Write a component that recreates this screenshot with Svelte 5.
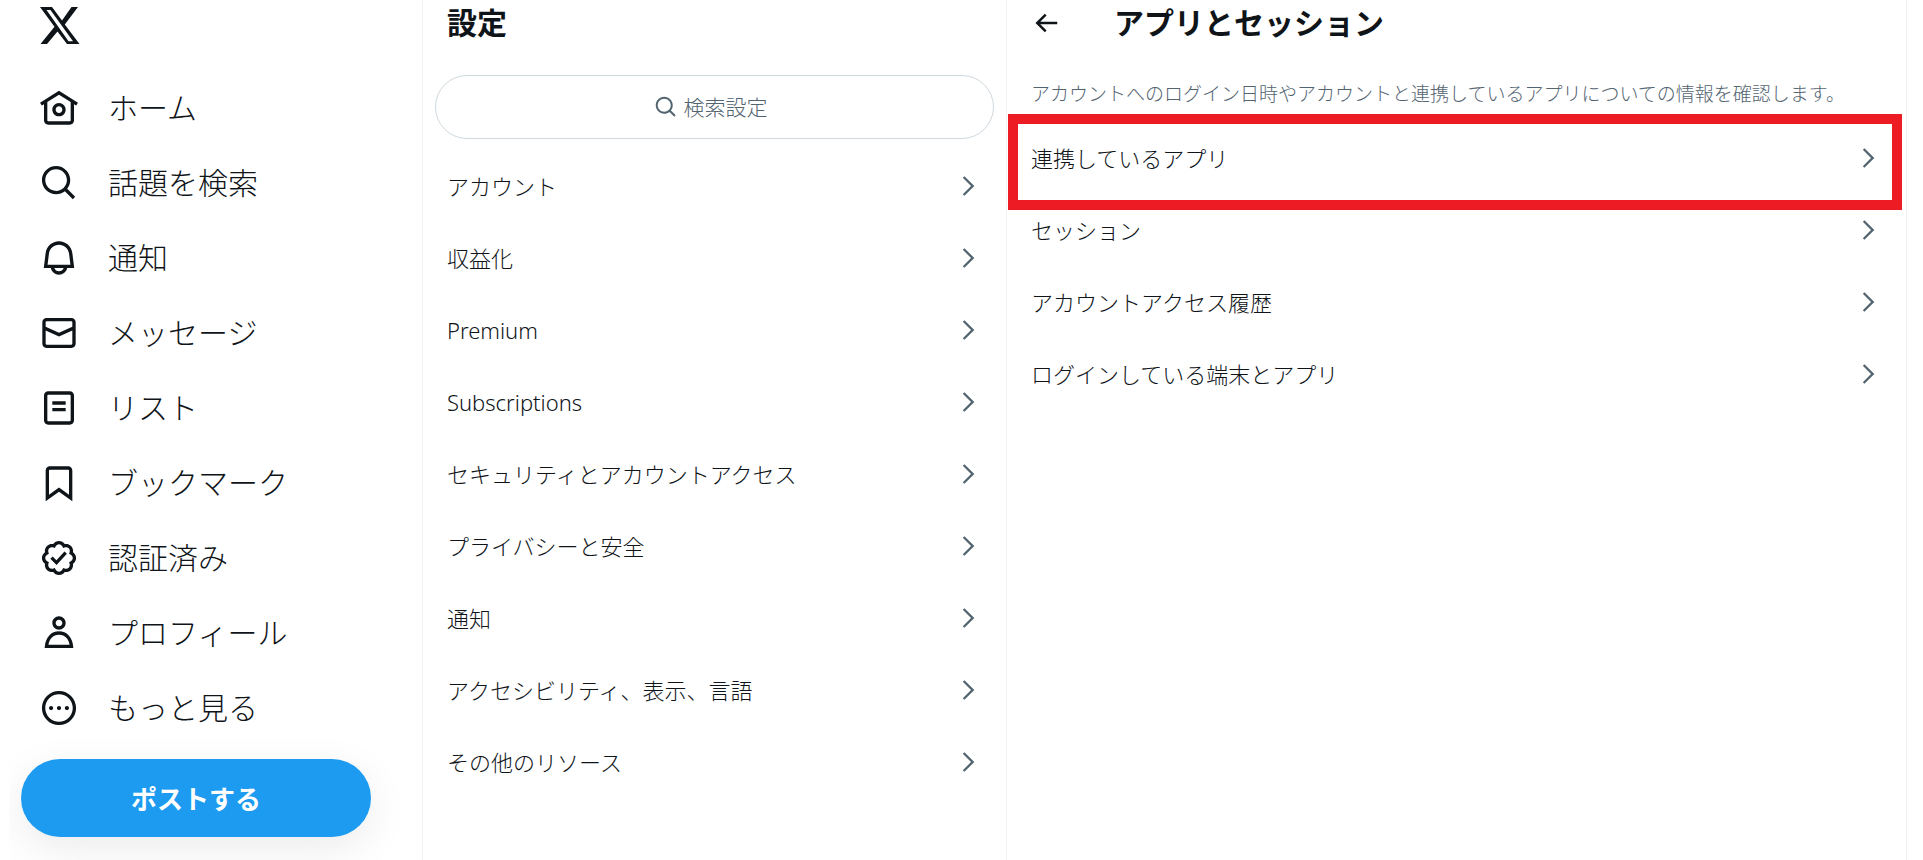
<script lang="ts">
	type NavItem = { id: string; label: string; icon: string };
	type Row = { id: string; label: string };

	const searchIcon =
		'M10.25 3.75c-3.59 0-6.5 2.91-6.5 6.5s2.91 6.5 6.5 6.5c1.795 0 3.419-.726 4.596-1.904 1.178-1.177 1.904-2.801 1.904-4.596 0-3.59-2.91-6.5-6.5-6.5zm-8.5 6.5c0-4.694 3.806-8.5 8.5-8.5s8.5 3.806 8.5 8.5c0 1.986-.682 3.815-1.824 5.262l4.781 4.781-1.414 1.414-4.781-4.781c-1.447 1.142-3.276 1.824-5.262 1.824-4.694 0-8.5-3.806-8.5-8.5z';
	const chevronIcon = 'M14.586 12L7.543 4.96l1.414-1.42L17.414 12l-8.457 8.46-1.414-1.42L14.586 12z';
	const backIcon =
		'M7.414 13l5.043 5.04-1.414 1.42L3.586 12l7.457-7.46 1.414 1.42L7.414 11H21v2H7.414z';

	const navItems: NavItem[] = [
		{
			id: 'home',
			label: 'ホーム',
			icon: 'M12 9c-2.209 0-4 1.791-4 4s1.791 4 4 4 4-1.791 4-4-1.791-4-4-4zm0 6c-1.105 0-2-.895-2-2s.895-2 2-2 2 .895 2 2-.895 2-2 2zm0-13.304L.622 8.807l1.06 1.696L3 9.679V19.5C3 20.881 4.119 22 5.5 22h13c1.381 0 2.5-1.119 2.5-2.5V9.679l1.318.824 1.06-1.696L12 1.696zM19 19.5c0 .276-.224.5-.5.5h-13c-.276 0-.5-.224-.5-.5V8.429l7-4.375 7 4.375V19.5z'
		},
		{ id: 'explore', label: '話題を検索', icon: searchIcon },
		{
			id: 'notifications',
			label: '通知',
			icon: 'M19.993 9.042C19.48 5.017 16.054 2 11.996 2s-7.49 3.021-7.999 7.051L2.866 18H7.1c.463 2.282 2.481 4 4.9 4s4.437-1.718 4.9-4h4.236l-1.143-8.958zM12 20c-1.306 0-2.417-.835-2.829-2h5.658c-.412 1.165-1.523 2-2.829 2zm-6.866-4l.847-6.698C6.364 6.272 8.941 4 11.996 4s5.627 2.268 6.013 5.295L18.864 16H5.134z'
		},
		{
			id: 'messages',
			label: 'メッセージ',
			icon: 'M1.998 5.5c0-1.381 1.119-2.5 2.5-2.5h15c1.381 0 2.5 1.119 2.5 2.5v13c0 1.381-1.119 2.5-2.5 2.5h-15c-1.381 0-2.5-1.119-2.5-2.5v-13zm2.5-.5c-.276 0-.5.224-.5.5v2.764l8 3.638 8-3.636V5.5c0-.276-.224-.5-.5-.5h-15zm15.5 5.463l-8 3.636-8-3.638V18.5c0 .276.224.5.5.5h15c.276 0 .5-.224.5-.5v-8.037z'
		},
		{
			id: 'lists',
			label: 'リスト',
			icon: 'M3 4.5C3 3.12 4.12 2 5.5 2h13C19.88 2 21 3.12 21 4.5v15c0 1.38-1.12 2.5-2.5 2.5h-13C4.12 22 3 20.88 3 19.5v-15zM5.5 4c-.28 0-.5.22-.5.5v15c0 .28.22.5.5.5h13c.28 0 .5-.22.5-.5v-15c0-.28-.22-.5-.5-.5h-13zM16 10H8V8h8v2zm-8 2h8v2H8v-2z'
		},
		{
			id: 'bookmarks',
			label: 'ブックマーク',
			icon: 'M4 4.5C4 3.12 5.119 2 6.5 2h11C18.881 2 20 3.12 20 4.5v18.44l-8-5.71-8 5.71V4.5zM6.5 4c-.276 0-.5.22-.5.5v14.56l6-4.29 6 4.29V4.5c0-.28-.224-.5-.5-.5h-11z'
		},
		{
			id: 'verified',
			label: '認証済み',
			icon: 'M8.52 3.59c.8-1.1 2.04-1.84 3.48-1.84s2.68.74 3.49 1.84c1.34-.21 2.74.14 3.76 1.16s1.37 2.42 1.16 3.77c1.1.8 1.84 2.04 1.84 3.48s-.74 2.68-1.84 3.48c.21 1.34-.14 2.75-1.16 3.77s-2.42 1.37-3.76 1.16c-.8 1.1-2.05 1.84-3.49 1.84s-2.68-.74-3.48-1.84c-1.34.21-2.75-.14-3.77-1.16-1.01-1.02-1.37-2.42-1.16-3.77-1.09-.8-1.84-2.04-1.84-3.48s.75-2.68 1.84-3.48c-.21-1.35.14-2.75 1.16-3.77s2.43-1.37 3.77-1.16zm3.48.16c-.85 0-1.66.53-2.12 1.43l-.38.77-.82-.27c-.96-.32-1.91-.12-2.51.49-.6.6-.8 1.54-.49 2.51l.27.81-.77.39c-.9.46-1.43 1.27-1.43 2.12s.53 1.66 1.43 2.12l.77.39-.27.81c-.31.97-.11 1.91.49 2.51.6.61 1.55.81 2.51.49l.82-.27.38.77c.46.9 1.27 1.43 2.12 1.43s1.66-.53 2.12-1.43l.39-.77.82.27c.96.32 1.9.12 2.51-.49.6-.6.8-1.55.48-2.51l-.26-.81.76-.39c.91-.46 1.43-1.27 1.43-2.12s-.52-1.66-1.43-2.12l-.77-.39.27-.81c.32-.97.12-1.91-.48-2.51-.61-.61-1.55-.81-2.51-.49l-.82.27-.39-.77c-.46-.9-1.27-1.43-2.12-1.43zm4.74 5.68l-6.2 6.77-3.74-3.74 1.41-1.42 2.26 2.26 4.8-5.23 1.47 1.36z'
		},
		{
			id: 'profile',
			label: 'プロフィール',
			icon: 'M5.651 19h12.698c-.337-1.8-1.023-3.21-1.945-4.19C15.318 13.65 13.838 13 12 13s-3.317.65-4.404 1.81c-.922.98-1.608 2.39-1.945 4.19zm.486-5.56C7.627 11.85 9.648 11 12 11s4.373.85 5.863 2.44c1.477 1.58 2.366 3.8 2.632 6.46l.11 1.1H3.395l.11-1.1c.266-2.66 1.155-4.88 2.632-6.46zM12 4c-1.105 0-2 .9-2 2s.895 2 2 2 2-.9 2-2-.895-2-2-2zM8 6c0-2.21 1.791-4 4-4s4 1.79 4 4-1.791 4-4 4-4-1.79-4-4z'
		},
		{
			id: 'more',
			label: 'もっと見る',
			icon: 'M3.75 12c0-4.56 3.69-8.25 8.25-8.25s8.25 3.69 8.25 8.25-3.69 8.25-8.25 8.25S3.75 16.56 3.75 12zM12 1.75C6.34 1.75 1.75 6.34 1.75 12S6.34 22.25 12 22.25 22.25 17.66 22.25 12 17.66 1.75 12 1.75zm-4.75 11.5c.69 0 1.25-.56 1.25-1.25s-.56-1.25-1.25-1.25S6 11.31 6 12s.56 1.25 1.25 1.25zm9.5 0c.69 0 1.25-.56 1.25-1.25s-.56-1.25-1.25-1.25-1.25.56-1.25 1.25.56 1.25 1.25 1.25zM13.25 12c0 .69-.56 1.25-1.25 1.25s-1.25-.56-1.25-1.25.56-1.25 1.25-1.25 1.25.56 1.25 1.25z'
		}
	];

	const settings: Row[] = [
		{ id: 'account', label: 'アカウント' },
		{ id: 'monetization', label: '収益化' },
		{ id: 'premium', label: 'Premium' },
		{ id: 'subscriptions', label: 'Subscriptions' },
		{ id: 'security', label: 'セキュリティとアカウントアクセス' },
		{ id: 'privacy', label: 'プライバシーと安全' },
		{ id: 'notifications', label: '通知' },
		{ id: 'accessibility', label: 'アクセシビリティ、表示、言語' },
		{ id: 'resources', label: 'その他のリソース' }
	];

	const sessions: Row[] = [
		{ id: 'connected', label: '連携しているアプリ' },
		{ id: 'sessions', label: 'セッション' },
		{ id: 'history', label: 'アカウントアクセス履歴' },
		{ id: 'devices', label: 'ログインしている端末とアプリ' }
	];

	let highlighted = $state('connected');
	let query = $state('');
</script>

{#snippet icon(d: string)}
	<svg viewBox="0 0 24 24" aria-hidden="true"><path {d} /></svg>
{/snippet}

{#snippet rows(items: Row[], marked: string)}
	<ul class="rows">
		{#each items as item (item.id)}
			<li class:marked={item.id === marked}>
				<a href="#{item.id}">
					<span>{item.label}</span>
					{@render icon(chevronIcon)}
				</a>
			</li>
		{/each}
	</ul>
{/snippet}

<div class="layout">
	<header class="sidebar">
		<a class="logo" href="#top" aria-label="X">
			<svg viewBox="0 0 40 38" aria-hidden="true">
				<path
					fill-rule="evenodd"
					d="M0 0H12L22 13.500L31.500 0H38L24.800 17.500L39.500 37H27L17.500 24.500L7 37H.5L14.500 19.800ZM6.500 3L28.500 34.300H33L10.500 3Z"
				/>
			</svg>
		</a>
		<nav>
			{#each navItems as item (item.id)}
				<a class="nav-item" href="#{item.id}">
					{@render icon(item.icon)}
					<span>{item.label}</span>
				</a>
			{/each}
		</nav>
		<button type="button" class="post">ポストする</button>
	</header>

	<section class="settings">
		<h2>設定</h2>
		<label class="search">
			{@render icon(searchIcon)}
			<input type="text" placeholder="検索設定" aria-label="検索設定" bind:value={query} />
		</label>
		{@render rows(settings, '')}
	</section>

	<section class="detail">
		<div class="detail-head">
			<button type="button" class="back" aria-label="戻る">{@render icon(backIcon)}</button>
			<h2>アプリとセッション</h2>
		</div>
		<p>
			アカウントへのログイン日時やアカウントと連携しているアプリについての情報を確認します。
		</p>
		{@render rows(sessions, highlighted)}
	</section>
</div>

<style>
	:global(body) {
		background: #fff;
	}
	.layout {
		display: grid;
		grid-template-columns: 423px minmax(0, 584fr) minmax(0, 900fr);
		min-height: 100vh;
		padding-right: 16px;
		box-sizing: border-box;
		color: #0f1419;
		font-family: 'Noto Sans', 'Noto Sans CJK JP', sans-serif;
		font-weight: 300;
	}
	a {
		color: inherit;
		text-decoration: none;
	}
	svg {
		display: block;
		flex: none;
		fill: currentColor;
	}
	h2 {
		margin: 0;
		font-size: 30px;
		line-height: 46px;
		font-weight: 700;
	}
	.sidebar,
	.settings,
	.detail {
		box-sizing: border-box;
		border-right: 1px solid #eff3f4;
	}

	/* left navigation */
	.sidebar {
		display: flex;
		flex-direction: column;
		overflow: hidden;
		margin-left: 9px;
		padding: 7px 51px 0 12px;
	}
	.logo {
		margin: 0 0 25px 19px;
	}
	.logo svg {
		width: 40px;
		height: 38px;
	}
	.nav-item {
		display: flex;
		align-items: center;
		gap: 29px;
		height: 75px;
		padding-left: 18px;
		font-size: 30px;
		line-height: 36px;
	}
	.nav-item svg {
		width: 40px;
		height: 40px;
	}
	.post {
		height: 78px;
		margin-top: 14px;
		border: none;
		border-radius: 39px;
		background: #1d9bf0;
		box-shadow: 0 12px 42px rgba(0, 0, 0, 0.08);
		color: #fff;
		font: inherit;
		font-size: 26px;
		font-weight: 700;
		cursor: pointer;
	}

	/* settings list */
	.settings h2 {
		padding-left: 24px;
	}
	.search {
		display: flex;
		align-items: center;
		justify-content: center;
		gap: 6px;
		height: 64px;
		margin: 29px 12px 11px;
		box-sizing: border-box;
		border: 1px solid #cfd9de;
		border-radius: 32px;
		color: #536471;
	}
	.search svg {
		width: 24px;
		height: 24px;
	}
	.search input {
		width: 92px;
		padding: 0;
		border: none;
		outline: none;
		background: none;
		color: #0f1419;
		font: inherit;
		font-size: 21px;
	}
	.search input::placeholder {
		color: #536471;
		opacity: 1;
	}

	.rows {
		list-style: none;
		margin: 0;
		padding: 0;
	}
	.rows a {
		display: flex;
		align-items: center;
		justify-content: space-between;
		height: 72px;
		padding: 0 24px;
		font-size: 22px;
		line-height: 30px;
	}
	.rows svg {
		width: 28px;
		height: 28px;
		color: #536471;
	}
	.marked {
		position: relative;
	}
	.marked::after {
		content: '';
		position: absolute;
		inset: -8px 4px -16px 1px;
		border: 10px solid #ed1c24;
		pointer-events: none;
	}

	/* detail pane */
	.detail-head {
		display: flex;
		align-items: center;
		gap: 53px;
		padding-left: 24px;
	}
	.back {
		padding: 0;
		border: none;
		background: none;
		color: inherit;
		cursor: pointer;
	}
	.back svg {
		width: 30px;
		height: 30px;
	}
	.detail p {
		margin: 0;
		padding: 34px 24px 14px;
		color: #536471;
		font-size: 19px;
		line-height: 28px;
	}
</style>
